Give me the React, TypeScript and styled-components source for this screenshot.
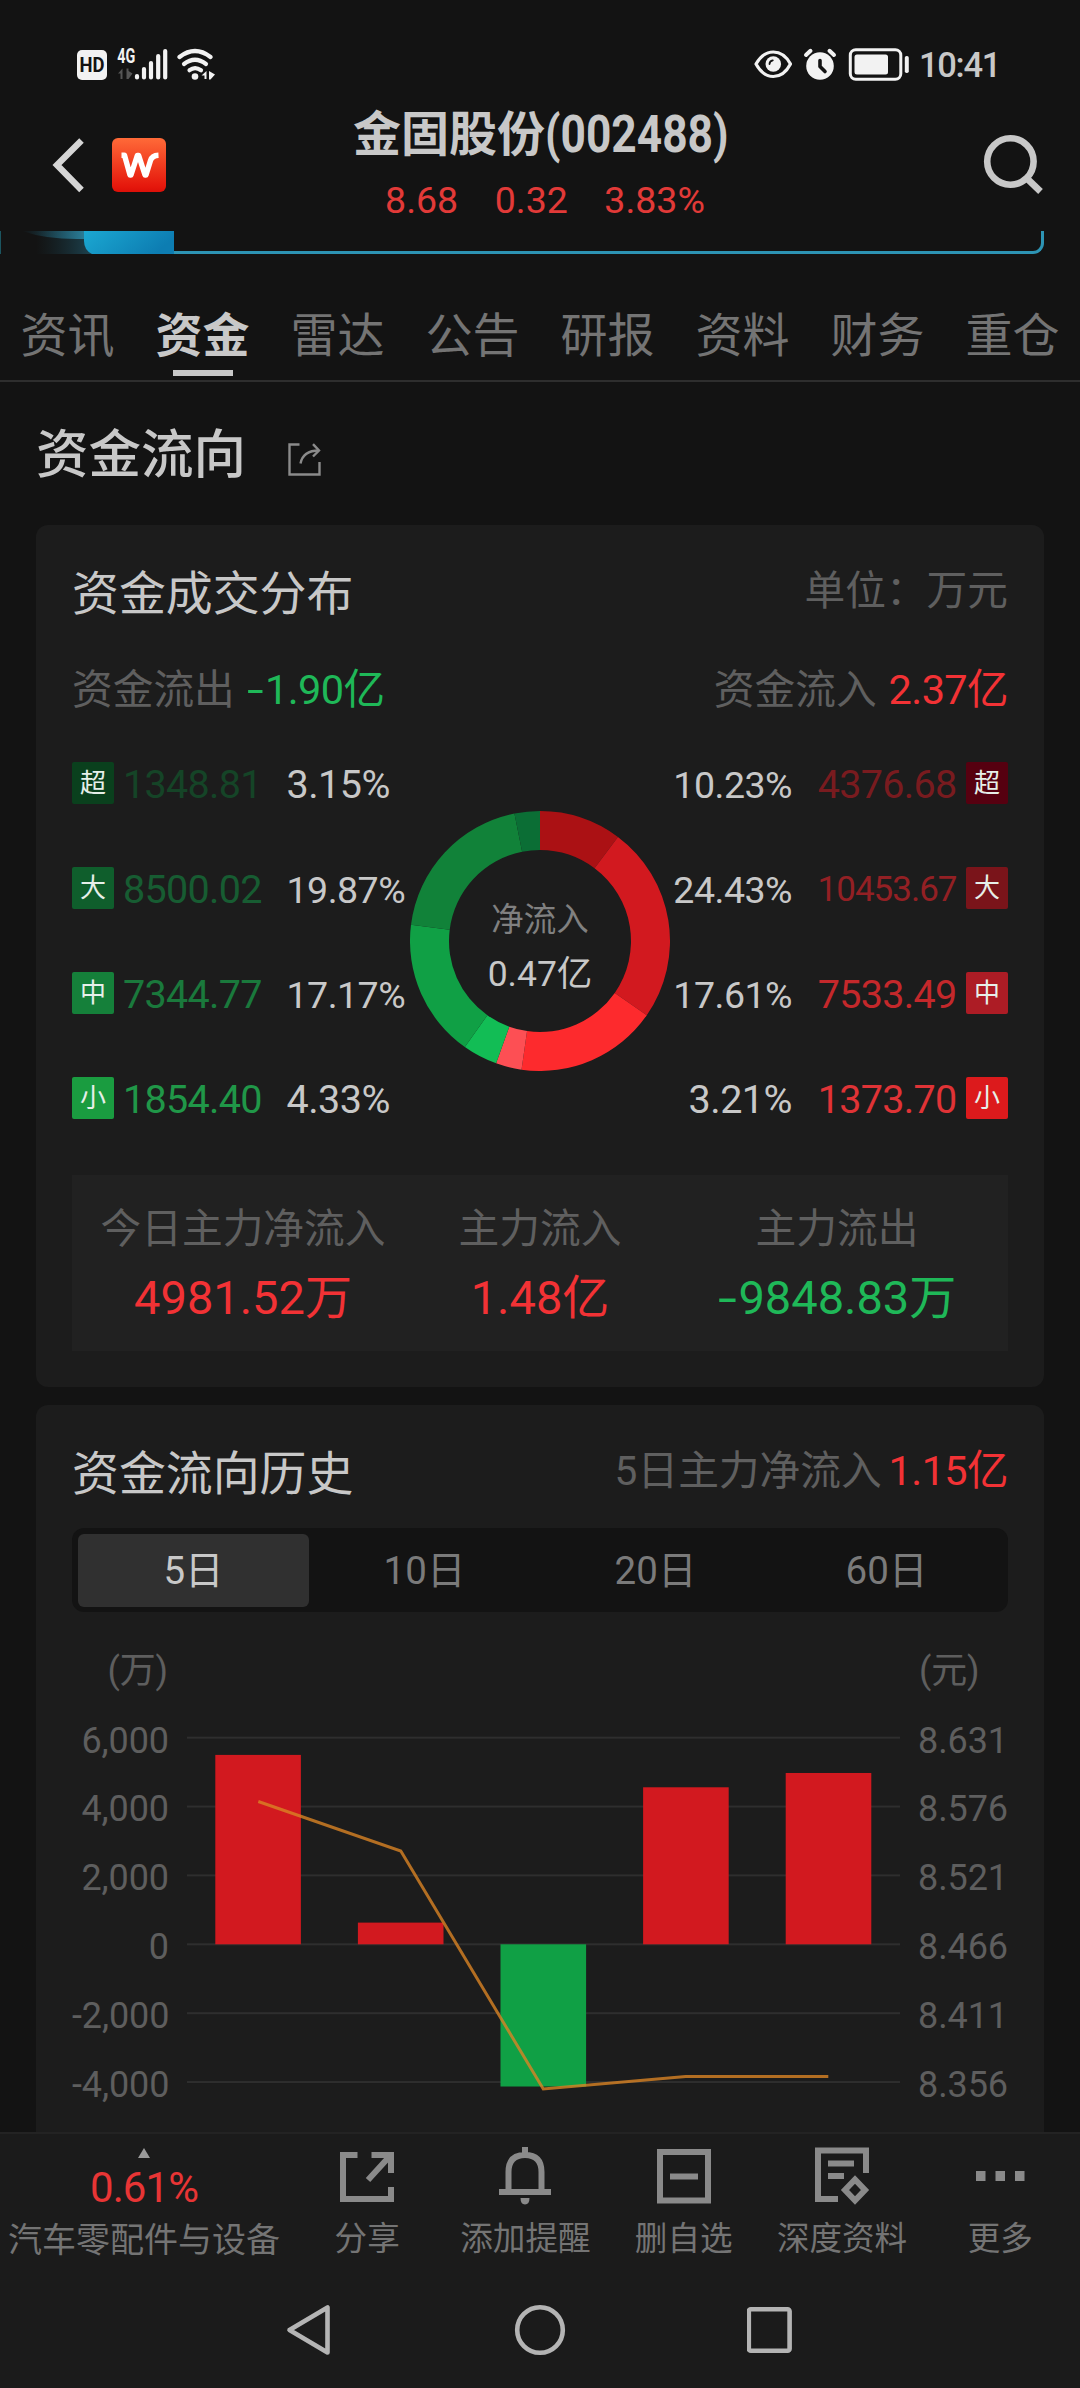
import React from 'react';
import styled, { createGlobalStyle } from 'styled-components';

const c = {
  page: '#131313',
  card: '#1c1c1c',
  panel: '#212121',
  bright: '#c8c8c8',
  mid: '#7c7c7c',
  dim: '#5f5f5f',
  grid: '#2e2e2e',
  red: '#f23235',
  green: '#1fb858',
};

const GlobalStyle = createGlobalStyle`
  * { box-sizing: border-box; }
  body {
    margin: 0;
    background: ${c.page};
    font-family: Roboto, "Noto Sans CJK SC", sans-serif;
    -webkit-font-smoothing: antialiased;
  }
  svg { display: block; flex: none; }
`;

const Screen = styled.div`
  width: 1080px;
  height: 2388px;
  overflow: hidden;
  display: flex;
  flex-direction: column;
  background: ${c.page};
  color: ${c.bright};
  white-space: nowrap;
`;

const Content = styled.main`
  flex: 1;
  min-height: 0;
  overflow: hidden;
`;

/* ---------- status bar ---------- */

const StatusBar = styled.div`
  height: 100px;
  padding: 28px 79px 0 77px;
  display: flex;
  justify-content: space-between;
`;

const StatusGroup = styled.div`
  height: 72px;
  display: flex;
  align-items: center;
`;

const Clock = styled.span`
  width: 82px;
  margin-left: 8px;
  padding-top: 2px;
  font-size: 34.5px;
  font-weight: 500;
  line-height: 72px;
  letter-spacing: -1.3px;
`;

/* ---------- header ---------- */

const Header = styled.header`
  height: 131px;
  padding: 0 37px 0 51px;
  display: grid;
  grid-template-columns: 180px 1fr 194px;
`;

const HeaderLeft = styled.div`
  height: 130px;
  display: flex;
  align-items: center;
  gap: 25px;
`;

const HeaderRight = styled(HeaderLeft)`
  height: 126px;
  justify-content: flex-end;
`;

const Heading = styled.div`
  display: flex;
  flex-direction: column;
  align-items: center;
`;

const StockName = styled.h1`
  margin: 0;
  padding-top: 3px;
  height: 70px;
  display: flex;
  font-size: 48px;
  font-weight: 700;
  line-height: 64px;
`;

const StockCode = styled.span`
  width: 182px;
  font-size: 51.5px;
  font-weight: 700;
  transform: scaleX(0.86);
  transform-origin: left center;
`;

const Quote = styled.div`
  display: flex;
  gap: 36.5px;
  padding-left: 10px;
  font-size: 37.5px;
  line-height: 60px;
  color: #e23a38;
`;

/* ---------- banner edge ---------- */

const Banner = styled.div`
  height: 23px;
  display: flex;
  padding-right: 36px;
`;

const BannerGlow = styled.div`
  width: 174px;
  display: flex;
`;

const BannerFrame = styled.div`
  flex: 1;
  border: 3px solid #2d94b4;
  border-width: 0 3px 3px 0;
  border-bottom-right-radius: 11px;
`;

/* ---------- tabs ---------- */

const Tabs = styled.nav`
  height: 128px;
  padding-top: 47px;
  display: grid;
  grid-template-columns: repeat(8, 1fr);
  border-bottom: 2px solid ${c.grid};
`;

const Tab = styled.div<{ $active?: boolean }>`
  display: flex;
  flex-direction: column;
  align-items: center;
  font-size: 47px;
  line-height: 69px;
  color: ${(p) => (p.$active ? c.bright : '#747474')};
  font-weight: ${(p) => (p.$active ? 700 : 400)};

  &::after {
    content: '';
    width: 60px;
    height: 6px;
    background: ${(p) => (p.$active ? c.bright : 'transparent')};
  }
`;

const SectionTitle = styled.h2`
  margin: 0;
  height: 143px;
  padding: 2px 0 0 36px;
  display: flex;
  align-items: center;
  gap: 42px;
  font-size: 52.5px;
  font-weight: 500;
  line-height: 80px;
`;

const TitleAction = styled.span`
  padding-top: 9px;
`;

/* ---------- cards ---------- */

const Card = styled.section<{ $height: number }>`
  height: ${(p) => p.$height}px;
  margin: 0 36px 18px;
  padding: 0 36px;
  border-radius: 12px;
  background: ${c.card};
`;

const CardHead = styled.div`
  display: flex;
  justify-content: space-between;
  padding-top: 36px;
  height: 123px;
  line-height: 60px;
`;

const CardTitle = styled.h3`
  margin: 0;
  padding-top: 3px;
  font-size: 46.9px;
  font-weight: 400;
`;

const FigureText = styled.span<{ $tone: string }>`
  font-size: 41.5px;
  letter-spacing: -0.6px;
  color: ${(p) => p.$tone};
`;

const Minus = styled.span`
  display: inline-block;
  width: 0.44em;
  letter-spacing: 0;
  transform: scaleX(1.45);
  transform-origin: left center;
`;

const Caption = styled.div<{ $tight?: boolean }>`
  display: flex;
  gap: ${(p) => (p.$tight ? 7 : 12)}px;
  font-size: 40.7px;
  color: ${c.dim};
`;

const Totals = styled.div`
  height: 105px;
  display: flex;
  justify-content: space-between;
  padding-top: 12px;
  line-height: 60px;
`;

const Distribution = styled.div`
  height: 422px;
  display: grid;
  grid-template-columns: 338px 260px 338px;
`;

const Side = styled.div`
  display: flex;
  flex-direction: column;
  gap: 63px;
  padding-top: 9px;
`;

const Entry = styled.div<{ $mirror?: boolean }>`
  height: 42px;
  display: flex;
  flex-direction: ${(p) => (p.$mirror ? 'row-reverse' : 'row')};
  align-items: center;
  line-height: 42px;
`;

const Badge = styled.span<{ $fill: string }>`
  width: 42px;
  height: 42px;
  border-radius: 2px;
  background: ${(p) => p.$fill};
  color: #e6efe9;
  font-size: 26px;
  line-height: 43px;
  text-align: center;
`;

const Amount = styled.span<{ $tone: string; $small?: boolean; $mirror?: boolean }>`
  width: 162px;
  padding: ${(p) => (p.$mirror ? '4px 9.5px 0 0' : '4px 0 0 9px')};
  display: flex;
  justify-content: ${(p) => (p.$mirror ? 'flex-end' : 'flex-start')};
  font-size: ${(p) => (p.$small ? 35 : 39.5)}px;
  letter-spacing: ${(p) => (p.$small ? -1 : -0.7)}px;
  color: ${(p) => p.$tone};
`;

const Percent = styled.span<{ $mirror?: boolean; $small?: boolean }>`
  padding: ${(p) => (p.$mirror ? '4px 12px 0 0' : '4px 0 0 10.5px')};
  font-size: ${(p) => (p.$small ? 37.5 : 39.5)}px;
  letter-spacing: -0.5px;
`;

const DonutCell = styled.div`
  padding-top: 58px;
  display: grid;

  > * { grid-area: 1 / 1; }
`;

const DonutLabel = styled.div`
  height: 260px;
  display: flex;
  flex-direction: column;
  align-items: center;
  justify-content: center;
  padding-top: 11px;
`;

const DonutCaption = styled.span`
  font-size: 32.5px;
  line-height: 54px;
  color: #808080;
`;

const DonutValue = styled.span`
  font-size: 35.5px;
  line-height: 54px;
`;

const Summary = styled.div`
  height: 176px;
  display: grid;
  grid-template-columns: 342fr 252fr 342fr;
  background: ${c.panel};
`;

const SummaryItem = styled.div`
  display: flex;
  flex-direction: column;
  align-items: center;
  padding-top: 24px;
`;

const SummaryLabel = styled.span`
  font-size: 40.7px;
  line-height: 60px;
  color: ${c.dim};
`;

const SummaryValue = styled.span<{ $tone: string }>`
  padding-top: 3px;
  font-size: 47px;
  line-height: 72px;
  color: ${(p) => p.$tone};
`;

/* ---------- history ---------- */

const Segments = styled.div`
  height: 84px;
  padding: 6px;
  display: grid;
  grid-template-columns: repeat(4, 1fr);
  border-radius: 12px;
  background: ${c.page};
`;

const Segment = styled.div<{ $active?: boolean }>`
  border-radius: 6px;
  background: ${(p) => (p.$active ? '#303030' : 'transparent')};
  color: ${(p) => (p.$active ? c.bright : '#7a7a7a')};
  font-size: 38.5px;
  line-height: 73px;
  text-align: center;
`;

const Chart = styled.div`
  height: 520px;
  display: grid;
  grid-template-columns: 97px 713px 1fr;
  column-gap: 18px;
`;

const Axis = styled.div<{ $left?: boolean }>`
  display: flex;
  flex-direction: column;
  text-align: ${(p) => (p.$left ? 'right' : 'left')};
  font-size: 36px;
  line-height: 68.87px;
  letter-spacing: -0.1px;
  color: #5e5e5e;
  padding-top: 23px;
`;

const AxisUnit = styled.span`
  height: 71.5px;
  line-height: 72px;
  padding: 0 1px;
`;

/* ---------- bottom ---------- */

const ActionBar = styled.footer`
  height: 146px;
  display: grid;
  grid-template-columns: 288px repeat(5, 158.3px);
  border-top: 2px solid #232323;
  background: #1b1b1b;
`;

const Sector = styled.div`
  display: flex;
  flex-direction: column;
  align-items: center;
  padding-top: 13.5px;
`;

const SectorChange = styled.span`
  font-size: 42px;
  line-height: 60px;
  letter-spacing: -0.9px;
  color: #e83535;
`;

const ActionLabel = styled.span<{ $size?: number }>`
  font-size: ${(p) => p.$size ?? 32.6}px;
  line-height: 44px;
  color: #747474;
`;

const Action = styled.div`
  display: flex;
  flex-direction: column;
  align-items: center;
  gap: 10px;
  padding-top: 11px;
`;

const SystemNav = styled.div`
  height: 110px;
  display: flex;
  padding: 24px 285px 0;
  justify-content: space-between;
  background: #1b1b1b;
`;

/* ---------- drawings ---------- */

const NetworkIcons = () => (
  <svg width="140" height="36" viewBox="77 46 140 36">
    <rect x="77" y="50" width="30" height="30" rx="5" fill="#f2f2f2" />
    <text x="92" y="71.8" fontSize="19.5" fontWeight="700" textAnchor="middle" textLength="25" lengthAdjust="spacingAndGlyphs" fill="#131313">HD</text>
    <text x="117.3" y="62.8" fontSize="19.5" fontWeight="700" textLength="18" lengthAdjust="spacingAndGlyphs" fill="#f2f2f2">4G</text>
    <path d="M118 73.5 L122.5 68.5 V79 H120.5 V73.5Z M126.5 68.5 H128.5 V71 L132.5 73.5 L128.5 79 H126.5Z" fill="#555" />
    <g stroke="#f2f2f2" strokeWidth="4.2" strokeLinecap="round">
      <path d="M137 76 V77.5 M144 69 V77.5 M151 63 V77.5 M158.2 56 V77.5 M165.2 51 V77.5" />
    </g>
    <g fill="none" stroke="#f2f2f2" strokeWidth="4.2" strokeLinecap="round">
      <path d="M179.5 57 Q195 45 210.500 57" />
      <path d="M184 64 Q195 55.5 206 64" />
      <path d="M189.5 70.2 Q195 66 201 70.2" />
    </g>
    <circle cx="195" cy="76.5" r="3.3" fill="#f2f2f2" />
    <path d="M201.5 75.5 L206.5 71 V79 H204.5 V75.5Z M209 71 L215 74.500 L210.5 79.5 H209Z" fill="#f2f2f2" />
  </svg>
);

const DeviceIcons = () => (
  <svg width="158" height="36" viewBox="753 46 158 36">
    <path d="M756 64 Q763 52 773.3 52 Q784 52 790.5 64 Q784 76.5 773.3 76.5 Q763 76.5 756 64Z" fill="none" stroke="#f2f2f2" strokeWidth="3.2" strokeLinejoin="round" />
    <circle cx="773.3" cy="64" r="7.8" fill="#f2f2f2" />
    <path d="M769.5 64 Q769.5 61 772.8 60.3" fill="none" stroke="#131313" strokeWidth="1.8" strokeLinecap="round" />
    <circle cx="820" cy="66" r="13.8" fill="#f2f2f2" />
    <path d="M806 55 L810.5 50.8 M834 55 L829.5 50.8" stroke="#f2f2f2" strokeWidth="4" strokeLinecap="round" />
    <path d="M820 60.5 V66.5 L825 71.5" fill="none" stroke="#131313" strokeWidth="3.6" strokeLinecap="round" strokeLinejoin="round" />
    <rect x="850.3" y="49.8" width="50.5" height="29.5" rx="5.5" fill="none" stroke="#f2f2f2" strokeWidth="3" />
    <rect x="854.5" y="54.5" width="33.5" height="20" rx="2.5" fill="#f2f2f2" />
    <rect x="904.8" y="56" width="4" height="17" rx="1.8" fill="#f2f2f2" />
  </svg>
);

const BackIcon = () => (
  <svg width="36" height="56" viewBox="51 137 36 56">
    <path d="M81.5 140.500 L57 165 L81.5 190" fill="none" stroke="#d6d6d6" strokeWidth="6.4" />
  </svg>
);

const BrandIcon = () => (
  <svg width="54" height="54" viewBox="0 0 54 54">
    <defs>
      <linearGradient id="brand" x1="0" y1="0" x2="0" y2="1">
        <stop offset="0" stopColor="#ff6a38" />
        <stop offset="0.9" stopColor="#e5170c" />
        <stop offset="1" stopColor="#dc1008" />
      </linearGradient>
    </defs>
    <rect width="54" height="54" rx="6" fill="url(#brand)" />
    <path
      d="M9.5 17.300 H12.500 L18 37 H19 L25.300 17.500 H26.700 L33 37 H34 L38.500 22.500 Q40 17.500 46.500 17.200"
      fill="none"
      stroke="#fff"
      strokeWidth="5.4"
      strokeLinejoin="round"
    />
  </svg>
);

const SearchIcon = () => (
  <svg width="60" height="64" viewBox="983 131 60 64">
    <circle cx="1010.4" cy="161.5" r="23.2" fill="none" stroke="#c8c8c8" strokeWidth="6.6" />
    <path d="M1027 178.5 L1040.5 191.5" stroke="#c8c8c8" strokeWidth="6.6" />
  </svg>
);

const BannerArt = () => (
  <svg width="174" height="23" viewBox="0 0 174 23">
    <defs>
      <linearGradient id="tile" x1="0" y1="0" x2="1" y2="0.3">
        <stop offset="0" stopColor="#1ba8d2" />
        <stop offset="1" stopColor="#0d7db2" />
      </linearGradient>
      <linearGradient id="glow" x1="0" y1="0" x2="1" y2="0">
        <stop offset="0" stopColor="#1d5a6e" stopOpacity="0" />
        <stop offset="1" stopColor="#2a7c96" />
      </linearGradient>
      <linearGradient id="shade" x1="0" y1="0" x2="1" y2="0">
        <stop offset="0" stopColor="#173038" stopOpacity="0" />
        <stop offset="1" stopColor="#1d4350" />
      </linearGradient>
    </defs>
    <rect width="1" height="23" fill="#1b5560" />
    <rect x="36" width="56" height="23" fill="url(#shade)" />
    <path d="M22 0 H84 V8 Q48 9 22 0Z" fill="url(#glow)" />
    <path d="M84 0 H174 V23 H92 Q84 19 84 10Z" fill="url(#tile)" />
  </svg>
);

const OpenIcon = () => (
  <svg width="33" height="33" viewBox="0 0 33 33" fill="none" stroke="#8b8b8b" strokeWidth="2.4">
    <path d="M11.5 1.5 H1.5 V31.5 H31.5 V19" />
    <path d="M12.5 20.5 Q15 7.5 31 7.5" />
    <path d="M25 1.2 L31 7.5 L25 13.5" />
  </svg>
);

const slices: [number, string][] = [
  [10.23, '#ab1114'],
  [24.43, '#d2191f'],
  [17.61, '#fd2a2d'],
  [3.21, '#fd4f54'],
  [4.33, '#12bd55'],
  [17.17, '#10a045'],
  [19.87, '#118239'],
  [3.15, '#0b6e35'],
];

const total = slices.reduce((s, [v]) => s + v, 0);

const Donut = () => {
  let acc = 0;
  const at = (r: number, v: number) => {
    const a = (v / total) * Math.PI * 2;
    return `${(130 + r * Math.sin(a)).toFixed(2)} ${(130 - r * Math.cos(a)).toFixed(2)}`;
  };
  return (
    <svg width="260" height="260" viewBox="0 0 260 260">
      {slices.map(([value, fill]) => {
        const from = acc;
        acc += value;
        return (
          <path
            key={fill}
            fill={fill}
            d={`M${at(130, from)} A130 130 0 0 1 ${at(130, acc)} L${at(91, acc)} A91 91 0 0 0 ${at(91, from)}Z`}
          />
        );
      })}
    </svg>
  );
};

const STEP = 68.87;
const ZERO = 332.3;
const flows = [5500, 630, -4130, 4560, 4975];
const linePoints = [189.5, 239, 477, 464.5, 464.5];

const FlowChart = () => {
  const y = (v: number) => ZERO - (v / 2000) * STEP;
  return (
    <svg width="713" height="500" viewBox="0 0 713 500">
      {[3, 2, 1, 0, -1, -2].map((n) => (
        <rect key={n} y={ZERO - n * STEP - 1} width="713" height="2" fill={c.grid} />
      ))}
      {flows.map((v, i) => (
        <rect
          key={v}
          x={28.3 + i * 142.6}
          y={Math.min(y(v), ZERO)}
          width="85.6"
          height={Math.abs(y(v) - ZERO)}
          fill={v > 0 ? '#d2191f' : '#10a045'}
        />
      ))}
      <polyline
        points={linePoints.map((p, i) => `${71.3 + i * 142.5},${p}`).join(' ')}
        fill="none"
        stroke="#d98324"
        strokeOpacity="0.8"
        strokeWidth="3"
      />
    </svg>
  );
};

const ActionIcon = ({ children }: { children: React.ReactNode }) => (
  <svg width="60" height="62" viewBox="0 0 60 62" fill="none" stroke="#8a8a8a" strokeWidth="6">
    {children}
  </svg>
);

const Signed = ({ value }: { value: string }) =>
  value.startsWith('-') ? (
    <>
      <Minus>-</Minus>
      {value.slice(1)}
    </>
  ) : (
    <>{value}</>
  );

const Figure = ({ value, tone }: { value: string; tone: string }) => (
  <FigureText $tone={tone}>
    <Signed value={value} />
  </FigureText>
);

/* ---------- data ---------- */

const tabs = ['资讯', '资金', '雷达', '公告', '研报', '资料', '财务', '重仓'];

const outflow = [
  { tag: '超', amount: '1348.81', pct: '3.15%', fill: '#0a401d', tone: '#154427' },
  { tag: '大', amount: '8500.02', pct: '19.87%', fill: '#0f5e2c', tone: '#175c32' },
  { tag: '中', amount: '7344.77', pct: '17.17%', fill: '#15803a', tone: '#1a793c' },
  { tag: '小', amount: '1854.40', pct: '4.33%', fill: '#1a9c40', tone: '#209748' },
];

const inflow = [
  { tag: '超', amount: '4376.68', pct: '10.23%', fill: '#560010', tone: '#791b1f' },
  { tag: '大', amount: '10453.67', pct: '24.43%', fill: '#7a141a', tone: '#932024' },
  { tag: '中', amount: '7533.49', pct: '17.61%', fill: '#ad1c25', tone: '#c4282b' },
  { tag: '小', amount: '1373.70', pct: '3.21%', fill: '#dc1a1c', tone: '#e03336' },
];

const summary = [
  { label: '今日主力净流入', value: '4981.52万', tone: c.red },
  { label: '主力流入', value: '1.48亿', tone: c.red },
  { label: '主力流出', value: '-9848.83万', tone: c.green },
];

const actions = [
  {
    label: '分享',
    icon: (
      <path d="M20.5 10 H6 V54 H54 V42 M34.5 10 H54 V28 M52 12 L31 35" />
    ),
  },
  {
    label: '添加提醒',
    icon: (
      <>
        <path d="M30 2 V10 M13.5 46.5 V27 Q13.5 10 30 10 Q46.5 10 46.5 27 V46.5 M4 47 H56" />
        <path d="M25.5 53 H34.5 Q34.5 59.500 30 59.5 Q25.5 59.5 25.5 53Z" fill="#8a8a8a" stroke="none" />
      </>
    ),
  },
  {
    label: '删自选',
    icon: <path d="M6 7 H54 V55.5 H6Z M16 31.5 H44" />,
  },
  {
    label: '深度资料',
    icon: (
      <>
        <path d="M26 54 H6 V5.500 H54 V28 M16 18.5 H42 M16 31 H32" />
        <path d="M43 34.5 L53 45 L43 55.5 L33 45Z" />
      </>
    ),
  },
  {
    label: '更多',
    icon: <path d="M6 31 H15.5 M25.5 31 H35 M45 31 H54.5" strokeWidth="10" />,
  },
];

export default function App() {
  return (
    <Screen>
      <GlobalStyle />
      <Content>
        <StatusBar>
          <StatusGroup>
            <NetworkIcons />
          </StatusGroup>
          <StatusGroup>
            <DeviceIcons />
            <Clock>10:41</Clock>
          </StatusGroup>
        </StatusBar>

        <Header>
          <HeaderLeft>
            <BackIcon />
            <BrandIcon />
          </HeaderLeft>
          <Heading>
            <StockName>
              金固股份<StockCode>(002488)</StockCode>
            </StockName>
            <Quote>
              <span>8.68</span>
              <span>0.32</span>
              <span>3.83%</span>
            </Quote>
          </Heading>
          <HeaderRight>
            <SearchIcon />
          </HeaderRight>
        </Header>

        <Banner>
          <BannerGlow>
            <BannerArt />
          </BannerGlow>
          <BannerFrame />
        </Banner>

        <Tabs>
          {tabs.map((t, i) => (
            <Tab key={t} $active={i === 1}>{t}</Tab>
          ))}
        </Tabs>

        <SectionTitle>
          资金流向
          <TitleAction>
            <OpenIcon />
          </TitleAction>
        </SectionTitle>

        <Card $height={862}>
          <CardHead>
            <CardTitle>资金成交分布</CardTitle>
            <Caption>单位：万元</Caption>
          </CardHead>
          <Totals>
            <Caption>
              资金流出<Figure tone={c.green} value="-1.90亿" />
            </Caption>
            <Caption>
              资金流入<Figure tone={c.red} value="2.37亿" />
            </Caption>
          </Totals>
          <Distribution>
            <Side>
              {outflow.map((e) => (
                <Entry key={e.tag}>
                  <Badge $fill={e.fill}>{e.tag}</Badge>
                  <Amount $tone={e.tone}>{e.amount}</Amount>
                  <Percent $small={e.pct.length > 5}>{e.pct}</Percent>
                </Entry>
              ))}
            </Side>
            <DonutCell>
              <Donut />
              <DonutLabel>
                <DonutCaption>净流入</DonutCaption>
                <DonutValue>0.47亿</DonutValue>
              </DonutLabel>
            </DonutCell>
            <Side>
              {inflow.map((e) => (
                <Entry key={e.tag} $mirror>
                  <Badge $fill={e.fill}>{e.tag}</Badge>
                  <Amount $mirror $tone={e.tone} $small={e.amount.length > 7}>{e.amount}</Amount>
                  <Percent $mirror $small={e.pct.length > 5}>{e.pct}</Percent>
                </Entry>
              ))}
            </Side>
          </Distribution>
          <Summary>
            {summary.map((s) => (
              <SummaryItem key={s.label}>
                <SummaryLabel>{s.label}</SummaryLabel>
                <SummaryValue $tone={s.tone}>
                  <Signed value={s.value} />
                </SummaryValue>
              </SummaryItem>
            ))}
          </Summary>
        </Card>

        <Card $height={800}>
          <CardHead>
            <CardTitle>资金流向历史</CardTitle>
            <Caption $tight>
              5日主力净流入<Figure tone={c.red} value="1.15亿" />
            </Caption>
          </CardHead>
          <Segments>
            {['5日', '10日', '20日', '60日'].map((s, i) => (
              <Segment key={s} $active={i === 0}>{s}</Segment>
            ))}
          </Segments>
          <Chart>
            <Axis $left>
              <AxisUnit>(万)</AxisUnit>
              {['6,000', '4,000', '2,000', '0', '-2,000', '-4,000'].map((v) => (
                <span key={v}>{v}</span>
              ))}
            </Axis>
            <FlowChart />
            <Axis>
              <AxisUnit>(元)</AxisUnit>
              {['8.631', '8.576', '8.521', '8.466', '8.411', '8.356'].map((v) => (
                <span key={v}>{v}</span>
              ))}
            </Axis>
          </Chart>
        </Card>
      </Content>

      <ActionBar>
        <Sector>
          <svg width="12" height="10" viewBox="0 0 12 10">
            <path d="M6 0 L12 10 H0Z" fill="#9a9a9a" />
          </svg>
          <SectorChange>0.61%</SectorChange>
          <ActionLabel $size={34}>汽车零配件与设备</ActionLabel>
        </Sector>
        {actions.map((a) => (
          <Action key={a.label}>
            <ActionIcon>{a.icon}</ActionIcon>
            <ActionLabel>{a.label}</ActionLabel>
          </Action>
        ))}
      </ActionBar>

      <SystemNav>
        <svg width="48" height="56" viewBox="0 0 48 56">
          <path d="M42.5 5.5 V50.5 L4.5 28Z" fill="none" stroke="#b4b4b4" strokeWidth="4.6" strokeLinejoin="round" />
        </svg>
        <svg width="56" height="56" viewBox="0 0 56 56">
          <circle cx="28" cy="28" r="22.8" fill="none" stroke="#b4b4b4" strokeWidth="4.6" />
        </svg>
        <svg width="48" height="56" viewBox="0 0 48 56">
          <rect x="1.8" y="7.2" width="40.8" height="41.6" rx="2" fill="none" stroke="#b4b4b4" strokeWidth="4.6" />
        </svg>
      </SystemNav>
    </Screen>
  );
}
